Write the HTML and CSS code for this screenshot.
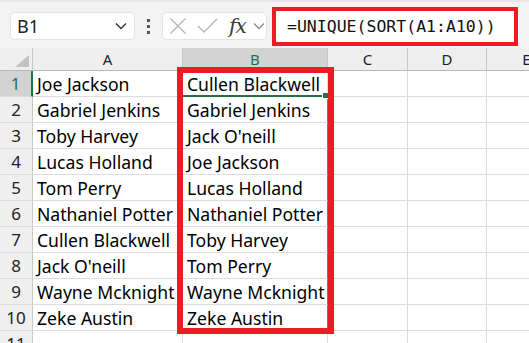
FILE: index.html
```html
<!DOCTYPE html>
<html lang="en">
<head>
    <meta charset="UTF-8">
    <title>UNIQUE SORT</title>
    <link rel="stylesheet" href="styles.css">
</head>
<body>
    <div class="toolbar">
        <div class="namebox">
            <span>B1</span>
            <svg class="chev" width="12" height="8" viewBox="0 0 12 8"><path d="M1 1.5 L6 6.5 L11 1.5" fill="none" stroke="#333" stroke-width="1.4"/></svg>
        </div>
        <div class="dots"><i></i><i></i><i></i></div>
        <div class="fxbox">
            <svg width="18" height="18" viewBox="0 0 18 18"><path d="M1.5 1.5 L16.5 16.5 M16.5 1.5 L1.5 16.5" stroke="#b4b4b4" stroke-width="1.3"/></svg>
            <svg width="21" height="16" viewBox="0 0 21 16"><path d="M1 8 L7 14 L20 1" fill="none" stroke="#b4b4b4" stroke-width="1.3"/></svg>
            <span class="fx">fx</span>
            <svg width="12" height="8" viewBox="0 0 12 8"><path d="M1 1.5 L6 6.5 L11 1.5" fill="none" stroke="#8a8a8a" stroke-width="1.3"/></svg>
        </div>
        <div class="formula">=UNIQUE(SORT(A1:A10))</div>
    </div>

    <div class="sheet">
        <div class="corner"></div>
        <div class="colhead">A</div>
        <div class="colhead active">B</div>
        <div class="colhead">C</div>
        <div class="colhead">D</div>
        <div class="colhead">E</div>

        <div class="rowhead active">1</div>
        <div class="cell">Joe Jackson</div>
        <div class="cell current">Cullen Blackwell</div>
        <div class="cell"></div><div class="cell"></div><div class="cell"></div>

        <div class="rowhead">2</div>
        <div class="cell">Gabriel Jenkins</div>
        <div class="cell spill">Gabriel Jenkins</div>
        <div class="cell"></div><div class="cell"></div><div class="cell"></div>

        <div class="rowhead">3</div>
        <div class="cell">Toby Harvey</div>
        <div class="cell spill">Jack O'neill</div>
        <div class="cell"></div><div class="cell"></div><div class="cell"></div>

        <div class="rowhead">4</div>
        <div class="cell">Lucas Holland</div>
        <div class="cell spill">Joe Jackson</div>
        <div class="cell"></div><div class="cell"></div><div class="cell"></div>

        <div class="rowhead">5</div>
        <div class="cell">Tom Perry</div>
        <div class="cell spill">Lucas Holland</div>
        <div class="cell"></div><div class="cell"></div><div class="cell"></div>

        <div class="rowhead">6</div>
        <div class="cell">Nathaniel Potter</div>
        <div class="cell spill">Nathaniel Potter</div>
        <div class="cell"></div><div class="cell"></div><div class="cell"></div>

        <div class="rowhead">7</div>
        <div class="cell">Cullen Blackwell</div>
        <div class="cell spill">Toby Harvey</div>
        <div class="cell"></div><div class="cell"></div><div class="cell"></div>

        <div class="rowhead">8</div>
        <div class="cell">Jack O'neill</div>
        <div class="cell spill">Tom Perry</div>
        <div class="cell"></div><div class="cell"></div><div class="cell"></div>

        <div class="rowhead">9</div>
        <div class="cell">Wayne Mcknight</div>
        <div class="cell spill">Wayne Mcknight</div>
        <div class="cell"></div><div class="cell"></div><div class="cell"></div>

        <div class="rowhead">10</div>
        <div class="cell">Zeke Austin</div>
        <div class="cell spill">Zeke Austin</div>
        <div class="cell"></div><div class="cell"></div><div class="cell"></div>

        <div class="rowhead">11</div>
        <div class="cell"></div><div class="cell"></div>
        <div class="cell"></div><div class="cell"></div><div class="cell"></div>
    </div>

    <div class="callout"></div>
</body>
</html>
```

FILE: styles.css
```css
body {
    margin: 0;
    width: 529px;
    height: 343px;
    overflow: hidden;
    background: #fff;
    font-family: "Noto Sans", sans-serif;
    position: relative;
}

.toolbar {
    height: 48px;
    box-sizing: border-box;
    padding-top: 2px;
    display: flex;
    align-items: center;
    background: #f3f3f3;
    border-top: 2px solid #e6e6e6;
}
.namebox {
    margin-left: 10px;
    width: 125px;
    height: 28px;
    box-sizing: border-box;
    background: #fff;
    border: 1px solid #e4e4e4;
    border-radius: 5px;
    display: flex;
    align-items: center;
    justify-content: space-between;
    padding: 0 7px 0 6px;
    font-size: 18px;
    color: #222;
}
.dots {
    margin-left: 12px;
    display: flex;
    flex-direction: column;
    gap: 3px;
}
.dots i {
    display: block;
    width: 3px;
    height: 3px;
    background: #555;
}
.fxbox {
    margin-left: 12px;
    width: 105px;
    height: 28px;
    box-sizing: border-box;
    background: #fff;
    border: 1px solid #e4e4e4;
    border-radius: 5px;
    display: flex;
    align-items: center;
    padding-left: 6px;
    gap: 10px;
}
.fx {
    font-family: "DejaVu Serif", serif;
    font-style: italic;
    font-size: 20px;
    line-height: 24px;
    color: #3a3a3a;
    margin-left: 1px;
    margin-right: -3px;
    letter-spacing: -1px;
}
.formula {
    margin-left: 5px;
    width: 246px;
    height: 39px;
    box-sizing: border-box;
    background: #fff;
    border: 4px solid #ed1c24;
    padding-left: 11px;
    font-family: "DejaVu Sans Mono", monospace;
    font-size: 16.5px;
    line-height: 31px;
    color: #111;
}

.sheet {
    display: grid;
    grid-template-columns: 33px 150px 145px 80px 79px 80px;
    grid-template-rows: 23px repeat(11, 26px);
}
.corner,
.colhead,
.rowhead {
    background: #efefef;
    box-sizing: border-box;
    color: #222;
}
.corner {
    border-right: 1px solid #c8c8c8;
    border-bottom: 1px solid #b8b8b8;
    position: relative;
}
.corner::after {
    content: "";
    position: absolute;
    right: 3px;
    bottom: 3px;
    border-style: solid;
    border-width: 0 0 12px 14px;
    border-color: transparent transparent #c3c3c3 transparent;
}
.colhead {
    border-right: 1px solid #c8c8c8;
    border-bottom: 1px solid #b8b8b8;
    text-align: center;
    font-size: 15px;
    line-height: 22px;
}
.colhead.active {
    background: #d3d3d3;
    color: #217346;
    border-bottom: 2px solid #217346;
}
.rowhead {
    border-right: 1px solid #c8c8c8;
    border-bottom: 1px solid #dadada;
    text-align: center;
    font-size: 17px;
    line-height: 24px;
    padding-top: 1px;
}
.rowhead.active {
    background: #d3d3d3;
    color: #217346;
    border-right: 2px solid #217346;
}
.cell {
    box-sizing: border-box;
    border-right: 1px solid #dcdcdc;
    border-bottom: 1px solid #dcdcdc;
    padding: 2px 0 0 4px;
    font-size: 17.6px;
    line-height: 23px;
    color: #000;
    white-space: nowrap;
    overflow: hidden;
}
.cell.current {
    position: relative;
    overflow: visible;
    border-bottom: 2px solid #217346;
}
.cell.current::after {
    content: "";
    position: absolute;
    right: -2px;
    bottom: -4px;
    width: 5px;
    height: 5px;
    background: #217346;
    border: 1px solid #fff;
}
.cell.spill {
    border-right: 1px solid #4f7fd6;
}

.callout {
    position: absolute;
    left: 177px;
    top: 67px;
    width: 157px;
    height: 267px;
    box-sizing: border-box;
    border: 6px solid #ed1c24;
}
```
